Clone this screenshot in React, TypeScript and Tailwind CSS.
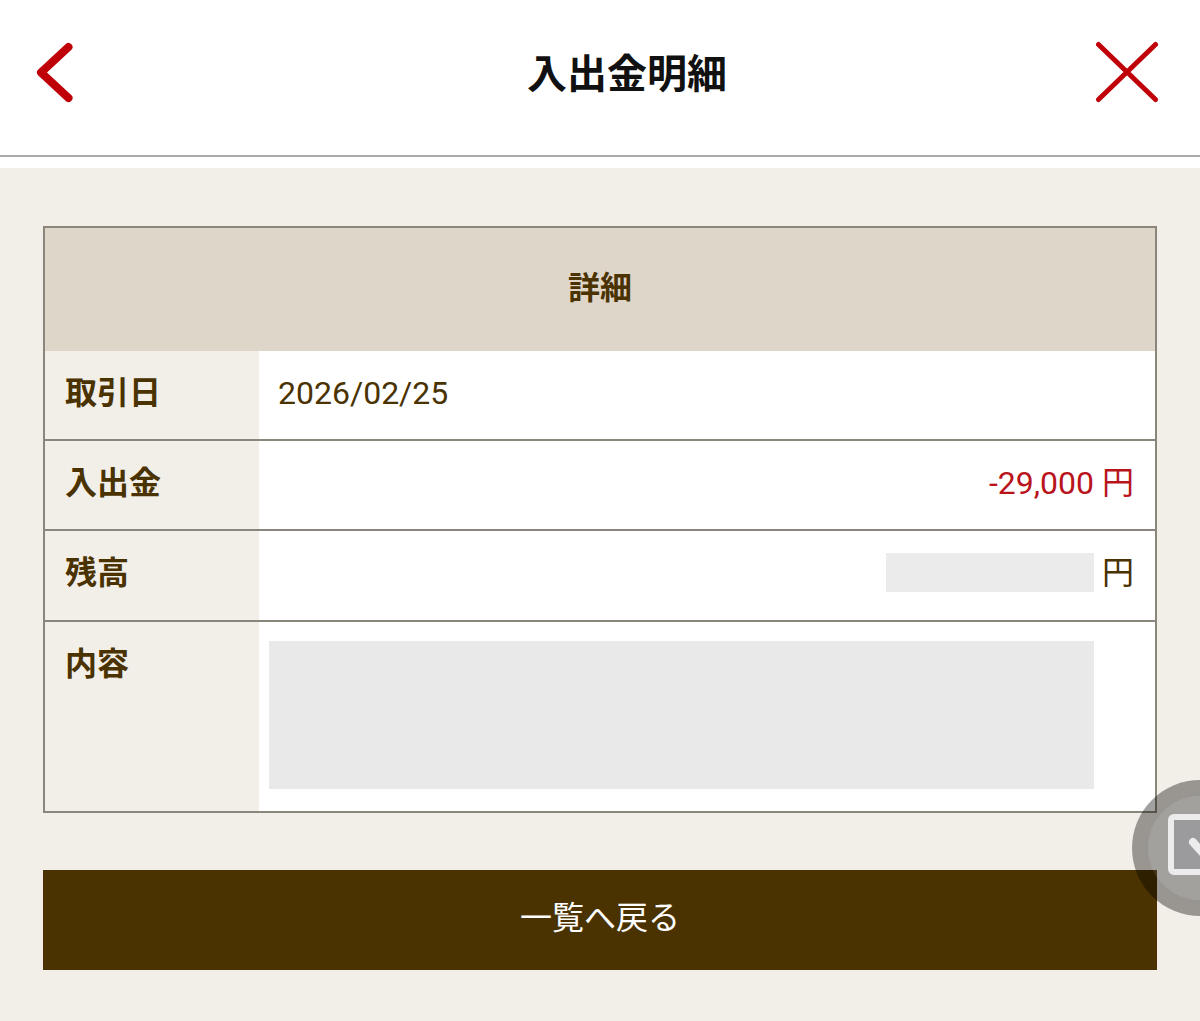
export default function App() {
  const font = { fontFamily: 'Roboto, "Noto Sans CJK JP", sans-serif' };
  const rowBorder = "border-b-2 border-[#8a867b]";
  return (
    <div style={font} className="relative h-[1021px] w-[1200px] overflow-hidden bg-[#f2eee8] text-[32px] text-[#4a3201]">
      <header className="flex h-[157px] items-center border-b-2 border-[#ababab] bg-white pb-[11px]">
        <div className="flex w-[159px] pl-[34px]">
          <svg width="42" height="64" viewBox="0 0 42 64" fill="none" stroke="#c00008" strokeWidth="8" strokeLinecap="round" strokeLinejoin="round">
            <path d="M34.5 7 L7 32.5 L34.5 58" />
          </svg>
        </div>
        <h1 className="flex-1 pt-[6px] text-center text-[40px] leading-none font-bold text-[#111]">入出金明細</h1>
        <div className="flex w-[105px]">
          <svg width="66" height="66" viewBox="0 0 66 66" fill="none" stroke="#c00008" strokeWidth="5" strokeLinecap="round">
            <path d="M3.5 5.5 L60.5 60.5 M60.5 5.5 L3.5 60.5" />
          </svg>
        </div>
      </header>
      <div className="h-[11px] bg-white" />
      <main className="px-[43px] pt-[58px]">
        <section className="border-2 border-b-0 border-[#8a867b]">
          <div className="flex h-[123px] items-center justify-center bg-[#ded6c9] pb-[4px] font-bold">詳細</div>
          <div className={`flex h-[90px] bg-white ${rowBorder}`}>
            <div className="flex w-[214px] items-center bg-[#f2eee8] pb-[4px] pl-[20px] font-bold">取引日</div>
            <div className="flex flex-1 items-center pb-[4px] pl-[19px]">2026/02/25</div>
          </div>
          <div className={`flex h-[90px] bg-white ${rowBorder}`}>
            <div className="flex w-[214px] items-center bg-[#f2eee8] pb-[4px] pl-[20px] font-bold">入出金</div>
            <div className="flex flex-1 items-center justify-end pr-[21px] pb-[4px] text-[#b9141c]">-29,000 円</div>
          </div>
          <div className={`flex h-[91px] bg-white ${rowBorder}`}>
            <div className="flex w-[214px] items-center bg-[#f2eee8] pb-[5px] pl-[20px] font-bold">残高</div>
            <div className="flex flex-1 items-center justify-end pr-[21px] pb-[5px]">
              <div className="mr-[8px] mb-[2px] h-[39px] w-[208px] bg-[#ebebeb]" />
              <span>円</span>
            </div>
          </div>
          <div className={`flex h-[191px] bg-white ${rowBorder}`}>
            <div className="w-[214px] bg-[#f2eee8] pt-[18px] pl-[20px] font-bold">内容</div>
            <div className="flex-1 pt-[19px] pl-[10px]">
              <div className="h-[148px] w-[825px] bg-[#e9e9e9]" />
            </div>
          </div>
        </section>
        <button className="mt-[57px] flex h-[100px] w-full items-center justify-center bg-[#4a3201] pb-[4px] text-[32px] text-white">一覧へ戻る</button>
      </main>
      <div className="absolute top-[780px] left-[1132px] flex h-[136px] w-[136px] items-center justify-center rounded-full bg-black/37">
        <div className="h-[104px] w-[104px] rounded-full bg-white/10 pt-[17px] pl-[20px]">
          <svg width="80" height="64" viewBox="0 0 80 64" fill="none">
            <rect x="3" y="4" width="74" height="55" rx="3" fill="#9b9b9e" stroke="#ececec" strokeWidth="6" />
            <path d="M25 29 L40 46 L62 20" stroke="#ececec" strokeWidth="8" strokeLinecap="round" strokeLinejoin="round" />
          </svg>
        </div>
      </div>
    </div>
  );
}
